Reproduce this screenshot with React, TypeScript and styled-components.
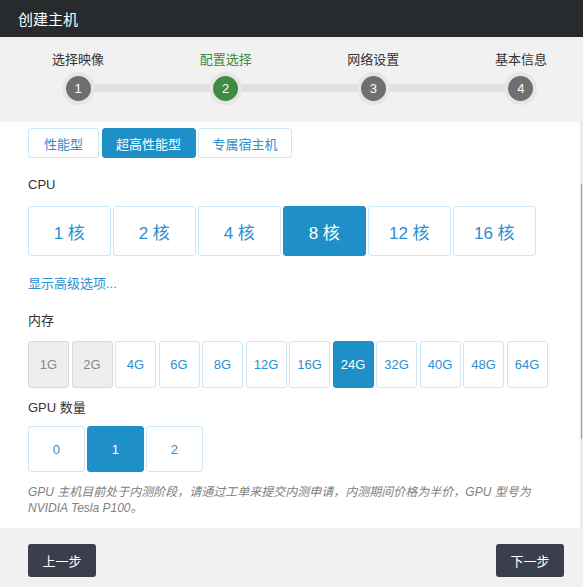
import React, { FC } from "react"
import styled, { createGlobalStyle, css } from "styled-components"

const BLUE = "#1f8fc7"
const BLUE_TEXT = "#2b8fd0"
const BLUE_BORDER = "#cde7f6"

const GlobalStyle = createGlobalStyle`
  html, body {
    margin: 0;
    padding: 0;
    background: #f1f1f1;
  }
  body {
    font-family: "Liberation Sans", Arial, "Noto Sans CJK SC", sans-serif;
    color: #333;
  }
`

const Page = styled.div`
  width: 583px;
  height: 587px;
  display: flex;
  flex-direction: column;
  overflow: hidden;
`

const Header = styled.header`
  height: 37px;
  flex: none;
  display: flex;
  align-items: center;
  padding-left: 18px;
  background: #272b2d;
  color: #fff;
  font-size: 15px;
`

const Steps = styled.div`
  height: 85px;
  flex: none;
  background: #f1f1f1;
  box-sizing: border-box;
  padding: 14px 32px 0 48px;
`

const StepTrack = styled.div`
  position: relative;
  display: flex;
  justify-content: space-between;

  &::before {
    content: "";
    position: absolute;
    left: 30px;
    right: 30px;
    top: 33px;
    height: 8px;
    background: #e0e0e0;
  }
`

const Step = styled.div<{ $active?: boolean }>`
  position: relative;
  width: 60px;
  display: flex;
  flex-direction: column;
  align-items: center;
  gap: 3px;
  font-size: 13px;
  line-height: 18px;
  color: ${(p) => (p.$active ? "#3d8a41" : "#333")};
  white-space: nowrap;
`

const StepDot = styled.div<{ $active?: boolean }>`
  width: 25px;
  height: 25px;
  border-radius: 50%;
  border: 4px solid #e6e6e6;
  background: ${(p) => (p.$active ? "#3f8a44" : "#6f6f6f")};
  color: #fff;
  font-size: 13px;
  display: flex;
  align-items: center;
  justify-content: center;
`

const Body = styled.div`
  flex: none;
  height: 406px;
  display: flex;
`

const Content = styled.div`
  flex: 1;
  background: #fff;
  padding: 6px 0 0 28px;
`

const ScrollTrack = styled.div`
  width: 3px;
  background: #ebebeb;
  display: flex;
  justify-content: center;
`

const ScrollThumb = styled.div`
  width: 1.5px;
  height: 255px;
  margin-top: 62px;
  background: #9a9a9a;
`

const Row = styled.div<{ $gap: number; $mt?: number }>`
  display: flex;
  gap: ${(p) => p.$gap}px;
  margin-top: ${(p) => p.$mt ?? 0}px;
`

const Label = styled.div<{ $mt: number }>`
  margin-top: ${(p) => p.$mt}px;
  font-size: 13px;
  line-height: 18px;
  color: #333;
`

const LinkText = styled.a`
  display: block;
  margin-top: 19px;
  font-size: 13px;
  line-height: 18px;
  color: ${BLUE_TEXT};
  text-decoration: none;
  cursor: pointer;
`

const Option = styled.button<{
  $w: number
  $h: number
  $size: number
  $active?: boolean
  $disabled?: boolean
}>`
  box-sizing: border-box;
  width: ${(p) => p.$w}px;
  height: ${(p) => p.$h}px;
  padding: 0;
  border-radius: 3px;
  border: 1px solid ${BLUE_BORDER};
  background: #fff;
  color: ${BLUE_TEXT};
  font-family: inherit;
  font-size: ${(p) => p.$size}px;
  display: flex;
  align-items: center;
  justify-content: center;
  cursor: pointer;

  ${(p) =>
    p.$active &&
    css`
      background: ${BLUE};
      border-color: ${BLUE};
      color: #fff;
    `}

  ${(p) =>
    p.$disabled &&
    css`
      background: #eeeeee;
      border-color: #d9d9d9;
      color: #888;
      cursor: not-allowed;
    `}
`

const Note = styled.p`
  margin: 13px 0 0;
  width: 530px;
  font-size: 12px;
  line-height: 15.6px;
  font-style: italic;
  color: #808080;
  white-space: nowrap;
`

const Footer = styled.footer`
  flex: 1;
  background: #f1f1f1;
  display: flex;
  justify-content: space-between;
  align-items: flex-start;
  padding: 16px 19px 0 28px;
`

const NavButton = styled.button`
  width: 68px;
  height: 33px;
  border: none;
  border-radius: 3px;
  background: #3b3e4c;
  color: #fff;
  font-family: inherit;
  font-size: 13px;
  cursor: pointer;
`

const steps = ["选择映像", "配置选择", "网络设置", "基本信息"]
const tabs = [
  { label: "性能型", w: 71 },
  { label: "超高性能型", w: 94, active: true },
  { label: "专属宿主机", w: 94 },
]
const cpus = [1, 2, 4, 8, 12, 16]
const mems = [1, 2, 4, 6, 8, 12, 16, 24, 32, 40, 48, 64]
const gpus = [0, 1, 2]

const App: FC = () => {
  return (
    <Page>
      <GlobalStyle />
      <Header>创建主机</Header>
      <Steps>
        <StepTrack>
          {steps.map((s, i) => (
            <Step key={s} $active={i === 1}>
              {s}
              <StepDot $active={i === 1}>{i + 1}</StepDot>
            </Step>
          ))}
        </StepTrack>
      </Steps>
      <Body>
        <Content>
          <Row $gap={2.5}>
            {tabs.map((t) => (
              <Option key={t.label} $w={t.w} $h={30} $size={13} $active={t.active}>
                {t.label}
              </Option>
            ))}
          </Row>

          <Label $mt={18}>CPU</Label>
          <Row $gap={2.5} $mt={12}>
            {cpus.map((c) => (
              <Option key={c} $w={82.5} $h={50} $size={17} $active={c === 8}>
                {c} 核
              </Option>
            ))}
          </Row>

          <LinkText>显示高级选项...</LinkText>

          <Label $mt={19}>内存</Label>
          <Row $gap={2.5} $mt={11}>
            {mems.map((m) => (
              <Option
                key={m}
                $w={41}
                $h={46.5}
                $size={13}
                $active={m === 24}
                $disabled={m < 4}
              >
                {m}G
              </Option>
            ))}
          </Row>

          <Label $mt={11.5}>GPU 数量</Label>
          <Row $gap={2.5} $mt={9}>
            {gpus.map((g) => (
              <Option key={g} $w={56.5} $h={46} $size={13} $active={g === 1}>
                {g}
              </Option>
            ))}
          </Row>

          <Note>
            GPU 主机目前处于内测阶段，请通过工单来提交内测申请，内测期间价格为半价，GPU 型号为
            <br />
            NVIDIA Tesla P100。
          </Note>
        </Content>
        <ScrollTrack>
          <ScrollThumb />
        </ScrollTrack>
      </Body>
      <Footer>
        <NavButton>上一步</NavButton>
        <NavButton>下一步</NavButton>
      </Footer>
    </Page>
  )
}

export default App
